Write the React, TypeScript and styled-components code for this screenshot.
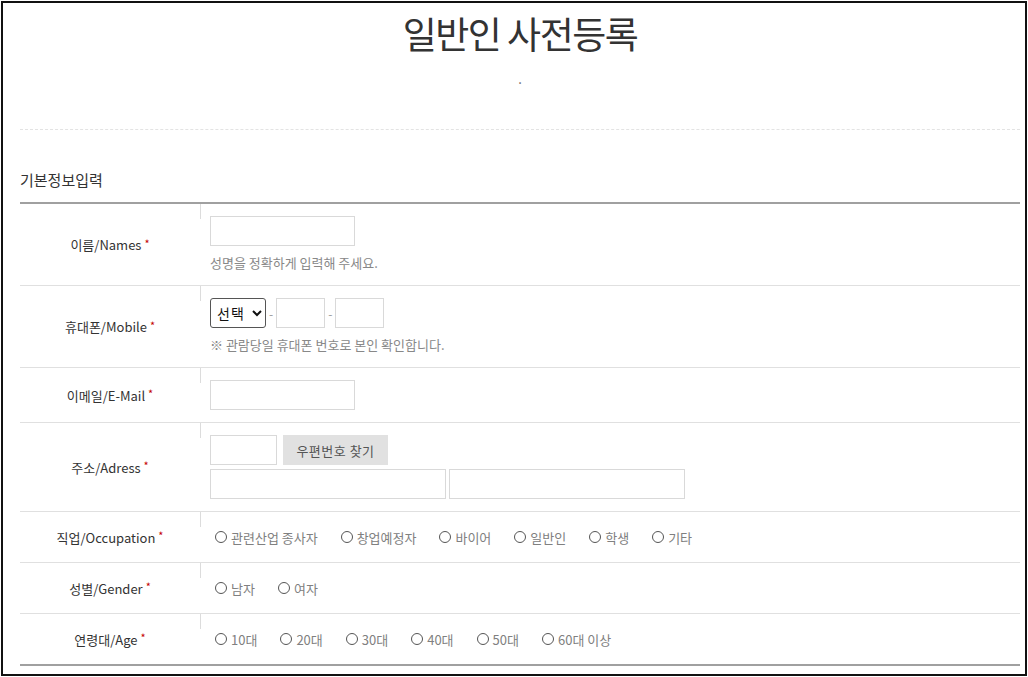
import * as React from 'react';
import styled, { createGlobalStyle } from 'styled-components';

const GlobalStyle = createGlobalStyle`
  html, body {
    margin: 0;
    padding: 0;
    background: #fff;
  }
  body {
    font-family: "Noto Sans CJK KR", "Noto Sans", sans-serif;
    color: #333;
  }
  * { box-sizing: border-box; }
`;

const Frame = styled.div`
  margin: 1px 0 0 1px;
  width: 1026px;
  height: 675px;
  border: 2px solid #111;
  overflow: hidden;
`;

const Content = styled.div`
  width: 1000px;
  margin-left: 17px;
`;

const Header = styled.header`
  text-align: center;
  padding-top: 3px;
  border-bottom: 1px dashed #e3e3e3;
  padding-bottom: 40px;
`;

const Title = styled.h1`
  margin: 0;
  font-size: 37px;
  line-height: 54px;
  font-weight: 400;
  letter-spacing: -1.5px;
  color: #333;
`;

const Sub = styled.p`
  margin: 9px 0 0;
  font-size: 13px;
  line-height: 20px;
  color: #666;
`;

const SectionTitle = styled.h2`
  margin: 39px 0 11px;
  font-size: 15px;
  line-height: 22px;
  font-weight: 400;
  color: #333;
`;

const Table = styled.div`
  border-top: 2px solid #a0a0a0;
  border-bottom: 2px solid #a0a0a0;
`;

const Row = styled.div`
  display: flex;
  border-top: 1px solid #e0e0e0;
  &:first-child { border-top: none; }
`;

const Label = styled.div`
  width: 180px;
  display: flex;
  align-items: center;
  justify-content: center;
  font-size: 13px;
  color: #333;
`;

const Req = styled.span`
  color: #c40000;
  font-size: 11px;
  margin-left: 3px;
  position: relative;
  top: -2px;
`;

const Field = styled.div<{ $pad?: number }>`
  position: relative;
  flex: 1;
  padding: ${p => p.$pad ?? 12}px 10px;
  display: flex;
  flex-direction: column;
  justify-content: center;
  gap: 4px;

  &::before {
    content: '';
    position: absolute;
    left: 0;
    top: 0;
    width: 1px;
    height: 15px;
    background: #dcdcdc;
  }
`;

const Line = styled.div<{ $gap?: number }>`
  display: flex;
  align-items: center;
  gap: ${p => p.$gap ?? 3}px;
`;

const TextInput = styled.input<{ $w: number }>`
  width: ${p => p.$w}px;
  height: 30px;
  border: 1px solid #d9d9d9;
  padding: 0 6px;
  margin: 0;
  font: inherit;
  outline: none;
`;

const Select = styled.select`
  width: 56px;
  height: 30px;
  border: 1px solid #555;
  border-radius: 3px;
  font-family: "Noto Sans CJK KR", sans-serif;
  font-size: 14px;
  letter-spacing: 1px;
  color: #111;
  padding: 0 2px;
  background: #fff;
`;

const Dash = styled.span`
  font-size: 12px;
  color: #999;
`;

const Help = styled.p`
  margin: 3px 0 0;
  font-size: 13px;
  line-height: 20px;
  color: #888;
`;

const ZipButton = styled.button`
  width: 105px;
  height: 30px;
  margin-left: 3px;
  border: none;
  background: #e1e1e1;
  color: #555;
  font-family: "Noto Sans CJK KR", sans-serif;
  font-size: 13px;
  letter-spacing: 0.5px;
`;

const RadioGroup = styled.div`
  display: flex;
  align-items: center;
  gap: 18px;
  height: 24px;
`;

const RadioItem = styled.label`
  display: inline-flex;
  align-items: center;
  gap: 4px;
  font-size: 13px;
  color: #808080;
`;

const Radio = styled.input`
  appearance: none;
  width: 12px;
  height: 12px;
  margin: 0 0 0 5px;
  border: 1px solid #555;
  border-radius: 50%;
  background: #fff;
`;

const radioSets = {
  job: ['관련산업 종사자', '창업예정자', '바이어', '일반인', '학생', '기타'],
  gender: ['남자', '여자'],
  age: ['10대', '20대', '30대', '40대', '50대', '60대 이상'],
};

function Radios({ name, items }: { name: string; items: string[] }) {
  return (
    <RadioGroup>
      {items.map(it => (
        <RadioItem key={it}>
          <Radio type="radio" name={name} />
          {it}
        </RadioItem>
      ))}
    </RadioGroup>
  );
}

function Lbl({ children }: { children: React.ReactNode }) {
  return (
    <Label>
      {children}
      <Req>*</Req>
    </Label>
  );
}

export default function App() {
  return (
    <>
      <GlobalStyle />
      <Frame>
        <Content>
          <Header>
            <Title>일반인 사전등록</Title>
            <Sub>.</Sub>
          </Header>

          <SectionTitle>기본정보입력</SectionTitle>

          <Table>
            <Row>
              <Lbl>이름/Names</Lbl>
              <Field>
                <TextInput $w={145} />
                <Help>성명을 정확하게 입력해 주세요.</Help>
              </Field>
            </Row>
            <Row>
              <Lbl>휴대폰/Mobile</Lbl>
              <Field>
                <Line $gap={3}>
                  <Select defaultValue="">
                    <option value="">선택</option>
                    <option>010</option>
                    <option>011</option>
                  </Select>
                  <Dash>-</Dash>
                  <TextInput $w={49} />
                  <Dash>-</Dash>
                  <TextInput $w={49} />
                </Line>
                <Help>※ 관람당일 휴대폰 번호로 본인 확인합니다.</Help>
              </Field>
            </Row>
            <Row>
              <Lbl>이메일/E-Mail</Lbl>
              <Field>
                <TextInput $w={145} />
              </Field>
            </Row>
            <Row>
              <Lbl>주소/Adress</Lbl>
              <Field>
                <Line>
                  <TextInput $w={67} />
                  <ZipButton>우편번호 찾기</ZipButton>
                </Line>
                <Line>
                  <TextInput $w={236} />
                  <TextInput $w={236} />
                </Line>
              </Field>
            </Row>
            <Row>
              <Lbl>직업/Occupation</Lbl>
              <Field $pad={13}>
                <Radios name="job" items={radioSets.job} />
              </Field>
            </Row>
            <Row>
              <Lbl>성별/Gender</Lbl>
              <Field $pad={13}>
                <Radios name="gender" items={radioSets.gender} />
              </Field>
            </Row>
            <Row>
              <Lbl>연령대/Age</Lbl>
              <Field $pad={13}>
                <Radios name="age" items={radioSets.age} />
              </Field>
            </Row>
          </Table>
        </Content>
      </Frame>
    </>
  );
}
